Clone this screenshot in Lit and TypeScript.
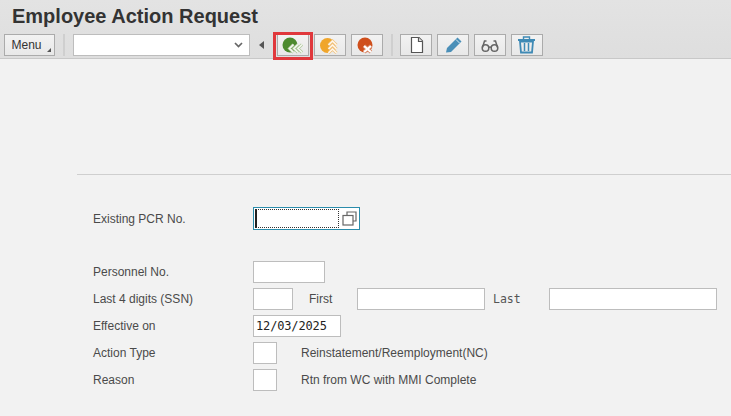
import { LitElement, html, css } from "lit";
import { customElement } from "lit/decorators.js";

@customElement("app-root")
export class AppRoot extends LitElement {
  static styles = css`
    :host { display: block; width: 731px; height: 416px; overflow: hidden; background: #f2f2f2; font-family: "Liberation Sans", Arial, sans-serif; color: #4a4a4a; font-size: 12px; }
    .head { height: 59px; box-sizing: border-box; background: linear-gradient(#e3e3e3, #dedede); border-bottom: 1px solid #c8c8c8; padding: 5px 0 0 12px; }
    h1 { margin: 0; height: 23px; font-size: 20px; line-height: 22px; font-weight: bold; color: #333; }
    .bar { display: flex; align-items: center; gap: 5px; height: 24px; margin-top: 5px; margin-left: -8px; }
    .btn { position: relative; box-sizing: border-box; height: 22px; width: 32px; flex: none; border: 1px solid #ababab; background: linear-gradient(#f2f2f2, #e8e8e8); display: flex; align-items: center; justify-content: center; padding: 0; }
    .btn svg { display: block; }
    .menu { width: 51px; font-family: inherit; font-size: 12px; color: #333; padding-right: 6px; }
    .menu::after { content: ""; position: absolute; right: 3px; bottom: 3px; border-style: solid; border-width: 0 0 4px 4px; border-color: transparent transparent #555 transparent; }
    .sep { width: 2px; height: 22px; background: #cfcfcf; flex: none; }
    .sep.a { margin: 0 3px; }
    .sep.b { margin: 0 2px 0 3px; }
    .combo { box-sizing: border-box; width: 177px; height: 22px; background: #fff; border: 1px solid #bdbdbd; display: flex; align-items: center; justify-content: flex-end; padding-right: 6px; }
    .back { margin: 0 8px 0 4px; width: 0; height: 0; border-style: solid; border-width: 4.5px 5px 4.5px 0; border-color: transparent #555 transparent transparent; }
    .hl { position: absolute; left: -5px; top: -3px; width: 40px; height: 28px; box-sizing: border-box; border: 3px solid #e0383c; pointer-events: none; }
    .rule { height: 1px; background: #cfcfcf; margin: 115px 0 0 77px; }
    .form { padding: 32px 0 0 93px; display: grid; grid-template-columns: 160px 1fr; grid-template-rows: 23px 21px; row-gap: 5px; grid-auto-rows: 22px; align-items: center; }
    .spacer { grid-column: 1 / -1; }
    .lab { line-height: 22px; }
    .cell { display: flex; align-items: center; }
    .f { box-sizing: border-box; height: 22px; background: #fff; border: 1px solid #bdbdbd; }
    .w72 { width: 72px; } .w40 { width: 40px; } .w128 { width: 128px; } .w168 { width: 168px; } .w24 { width: 24px; }
    .date { width: 88px; font-family: "DejaVu Sans Mono", monospace; font-size: 12px; line-height: 20px; padding-left: 2px; color: #222; letter-spacing: -0.15px; }
    .first { margin-left: 16px; width: 48px; }
    .last { width: 56px; margin-left: 8px; font-family: "DejaVu Sans Mono", monospace; font-size: 11.5px; color: #555; }
    .desc { margin-left: 24px; }
    .focus { box-sizing: border-box; width: 107px; height: 23px; background: #fff; border: 1px solid #2a8cab; display: flex; align-items: center; padding: 1px 2px 1px 1px; }
    .dots { box-sizing: border-box; width: 84px; height: 19px; border: 1px dotted #333; border-left: 2px solid #222; }
    .copy { margin-left: 3px; display: block; }
  `;

  render() {
    return html`
      <div class="head">
        <h1>Employee Action Request</h1>
        <div class="bar">
          <button class="btn menu">Menu</button>
          <div class="sep a"></div>
          <div class="combo">
            <svg width="9" height="6" viewBox="0 0 9 6"><path d="M1 1l3.500 3.500L8 1" fill="none" stroke="#666" stroke-width="1.700"/></svg>
          </div>
          <div class="back"></div>
          <div class="btn">
            <svg width="30" height="20" viewBox="0 0 30 20">
              <circle cx="12" cy="10" r="7.500" fill="#4d8a2f"/>
              <g fill="none">
                <path d="M15.500 9.500 11.500 13.500l4 4M20 9.500 16 13.500l4 4M24 9.500 20 13.500l4 4" stroke="#a9c495" stroke-width="3"/>
                <path d="M15.500 9.500 11.500 13.500l4 4M20 9.500 16 13.500l4 4M24 9.500 20 13.500l4 4" stroke="#f4f8f0" stroke-width="1.700"/>
              </g>
            </svg>
            <div class="hl"></div>
          </div>
          <div class="btn">
            <svg width="30" height="20" viewBox="0 0 30 20">
              <circle cx="12.500" cy="10.500" r="7.500" fill="#f0a52a"/>
              <g fill="none">
                <path d="M13.500 10l4-4 4 4M13.500 14l4-4 4 4M13.500 18l4-4 4 4" stroke="#f0c27c" stroke-width="3"/>
                <path d="M13.500 10l4-4 4 4M13.500 14l4-4 4 4M13.500 18l4-4 4 4" stroke="#fff8ec" stroke-width="1.500"/>
              </g>
            </svg>
          </div>
          <div class="btn">
            <svg width="30" height="20" viewBox="0 0 30 20">
              <circle cx="13" cy="10" r="7.500" fill="#cf4f1c"/>
              <path d="M12 11l7 6M19 11l-7 6" fill="none" stroke="#d98a6a" stroke-width="3.800"/>
              <path d="M12 11l7 6M19 11l-7 6" fill="none" stroke="#fff" stroke-width="2.200"/>
            </svg>
          </div>
          <div class="sep b"></div>
          <div class="btn">
            <svg width="30" height="20" viewBox="0 0 30 20">
              <path d="M10.500 2.500h7.500l3.500 3.500v11.500h-11z" fill="#fff" stroke="#555" stroke-width="1.200"/>
              <path d="M17.500 2.500v4h4" fill="#e5e5e5" stroke="#555" stroke-width="1.200"/>
            </svg>
          </div>
          <div class="btn">
            <svg width="30" height="20" viewBox="0 0 30 20">
              <path d="M8 17.500l1-4.500L19.500 2.500l4 4L13 17z" fill="#4a8fb8"/>
              <path d="M18 4.500l3.500 3.500" stroke="#dcebf3" stroke-width="1"/>
            </svg>
          </div>
          <div class="btn">
            <svg width="30" height="20" viewBox="0 0 30 20" fill="none" stroke="#666" stroke-width="1.500">
              <circle cx="10.500" cy="13" r="3.300"/>
              <circle cx="19.500" cy="13" r="3.300"/>
              <path d="M13.500 12.500c1-.7 2-.7 3 0M7.500 12.500 9.500 6h2M22.500 12.500 20.500 6h-2"/>
            </svg>
          </div>
          <div class="btn">
            <svg width="30" height="20" viewBox="0 0 30 20" fill="none" stroke="#3f8ab5">
              <path d="M6 5h17" stroke-width="2"/>
              <path d="M11.500 4V2h6v2" stroke-width="1.400"/>
              <path d="M8 6.500l1 11h11l1-11z" stroke-width="1.800"/>
              <path d="M12.500 8v8M16.500 8v8" stroke-width="1.500"/>
            </svg>
          </div>
        </div>
      </div>
      <div class="rule"></div>
      <div class="form">
        <div class="lab">Existing PCR No.</div>
        <div class="cell">
          <div class="focus">
            <div class="dots"></div>
            <svg class="copy" width="15" height="15" viewBox="0 0 15 15" fill="#fff" stroke="#666" stroke-width="1.200">
              <path d="M5 4V1h9v9h-3"/><rect x="1" y="4.500" width="10" height="9.500"/>
            </svg>
          </div>
        </div>
        <div class="spacer"></div>
        <div class="lab">Personnel No.</div>
        <div class="cell"><div class="f w72"></div></div>
        <div class="lab">Last 4 digits (SSN)</div>
        <div class="cell">
          <div class="f w40"></div>
          <div class="first">First</div>
          <div class="f w128"></div>
          <div class="last">Last</div>
          <div class="f w168"></div>
        </div>
        <div class="lab">Effective on</div>
        <div class="cell"><div class="f date">12/03/2025</div></div>
        <div class="lab">Action Type</div>
        <div class="cell"><div class="f w24"></div><div class="desc">Reinstatement/Reemployment(NC)</div></div>
        <div class="lab">Reason</div>
        <div class="cell"><div class="f w24"></div><div class="desc">Rtn from WC with MMI Complete</div></div>
      </div>
    `;
  }
}
